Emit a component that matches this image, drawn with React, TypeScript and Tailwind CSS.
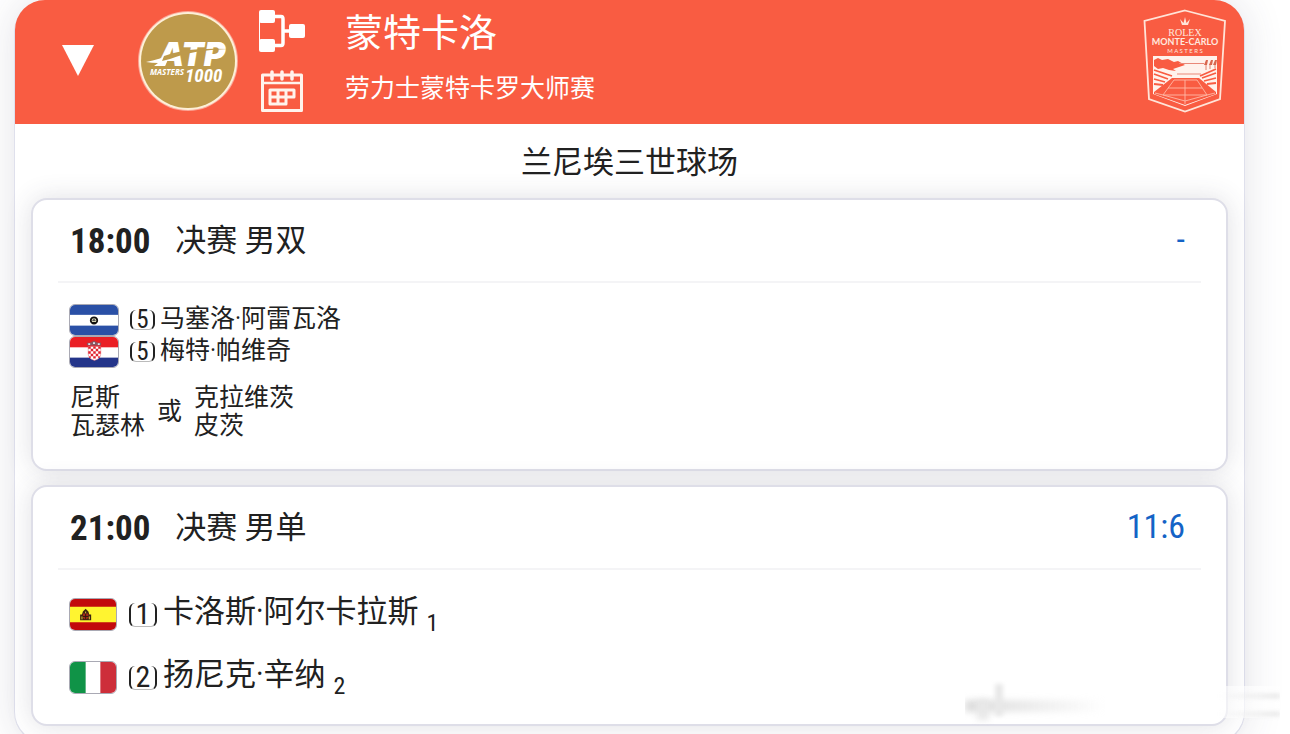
import { useState, type ReactNode } from 'react'

interface Player {
  country: Country
  seed: number
  name: string
  order?: number
}

type Country = 'sv' | 'hr' | 'es' | 'it'

const doubles: Player[] = [
  { country: 'sv', seed: 5, name: '马塞洛·阿雷瓦洛' },
  { country: 'hr', seed: 5, name: '梅特·帕维奇' },
]

const singles: Player[] = [
  { country: 'es', seed: 1, name: '卡洛斯·阿尔卡拉斯', order: 1 },
  { country: 'it', seed: 2, name: '扬尼克·辛纳', order: 2 },
]

function FlagArt({ country }: { country: Country }) {
  switch (country) {
    case 'sv':
      return (
        <>
          <rect width="50" height="32" fill="#fff" />
          <rect width="50" height="10.500" fill="#2a50a6" />
          <rect y="22" width="50" height="10" fill="#2a50a6" />
          <circle cx="25" cy="16.500" r="3.400" fill="#d6d6b4" stroke="#111" strokeWidth="1.800" />
          <path d="M23 17 L25 14 L27 17 Z" fill="#555" />
          <path d="M23 19 H27" stroke="#111" strokeWidth="2" />
        </>
      )
    case 'hr':
      return (
        <>
          <rect width="50" height="32" fill="#fff" />
          <rect width="50" height="11" fill="#ea1f25" />
          <rect y="22" width="50" height="10" fill="#24358a" />
          <path d="M18 9 L17.500 6 L21 6 L25 4 L29 6 L32.500 6 L32 9 Z" fill="#8a5560" />
          <path d="M19 7.500 h2 M24 6.500 h2 M29 7.500 h2" stroke="#dfe3ee" strokeWidth="1.800" />
          <path d="M19 10 h13 v8 q0 5 -6.500 7 q-6.500 -2 -6.500 -7 Z" fill="#fff" stroke="#e25a66" strokeWidth="0.500" />
          <path
            d="M19 10h2.600v2.600h-2.600z M24.200 10h2.600v2.600h-2.600z M29.400 10h2.600v2.600h-2.600z M21.600 12.600h2.600v2.600h-2.600z M26.800 12.600h2.600v2.600h-2.600z M19 15.200h2.600v2.600h-2.600z M24.200 15.200h2.600v2.600h-2.600z M29.400 15.200h2.600v2.600h-2.600z M21.600 17.800h2.600v2.600h-2.600z M26.800 17.800h2.600v2.600h-2.600z M20 20.400h1.600v2h-1.600z M24.200 20.400h2.600v2.600h-2.600z M29.400 20.400h1.600v2h-1.600z"
            fill="#e0222f"
          />
        </>
      )
    case 'es':
      return (
        <>
          <rect width="50" height="32" fill="#c20a0c" />
          <rect y="8" width="50" height="16" fill="#fff430" />
          <path d="M11 22 V16 h2 l1 -3 l3 -3 l3 3 l1 3 h2 v6 Z" fill="#3b2410" />
          <path d="M14 15 h6 v4 q-3 4 -6 0 Z" fill="#a3281a" />
          <path d="M13 18 v3 M21 18 v3 M17 13 v2" stroke="#e7cf3a" strokeWidth="1" />
          <path d="M17 15 v6 M14 18 h6" stroke="#2b1b0d" strokeWidth="1" />
        </>
      )
    case 'it':
      return (
        <>
          <rect width="50" height="32" fill="#fff" />
          <rect width="17" height="32" fill="#109347" />
          <rect x="33" width="17" height="32" fill="#cd2e3a" />
        </>
      )
  }
}

function Flag({ country, className }: { country: Country; className: string }) {
  return (
    <svg
      viewBox="0 0 50 32"
      preserveAspectRatio="none"
      aria-hidden="true"
      className={`shrink-0 rounded-md border border-[#a9a9b4] ${className}`}
    >
      <FlagArt country={country} />
    </svg>
  )
}

function AtpLogo() {
  return (
    <svg viewBox="0 0 104 104" className="h-[104px] w-[104px] shrink-0">
      <circle cx="52" cy="52" r="50" fill="#fff" opacity="0.450" />
      <circle cx="52" cy="52" r="49" fill="#fdf0d8" />
      <circle cx="52" cy="52" r="47" fill="#be9a4b" />
      <g fill="#fff" fontStyle="italic">
        <text x="22" y="57" fontSize="33" fontWeight="900" fontFamily="Inter, sans-serif">ATP</text>
        <text x="14" y="66" fontSize="8" fontWeight="700" fontFamily="'Open Sans', sans-serif">MASTERS</text>
        <text x="49" y="73" fontSize="19" fontWeight="700" fontFamily="'Roboto Condensed', sans-serif">1000</text>
      </g>
      <path d="M10 53 Q24 50 34 46 L29 57 L18 57 L22 54 Q16 54 10 53 Z" fill="#fff" />
      <path d="M28 47 Q50 38 92 40 Q56 41 34 50 L26 52 Z" fill="#be9a4b" />
    </svg>
  )
}

function DrawIcon() {
  return (
    <svg viewBox="0 0 46 42" className="h-[42px] w-[46px]" fill="#fff">
      <rect width="16" height="13" rx="2" />
      <rect y="29" width="16" height="13" rx="2" />
      <rect x="30" y="14" width="16" height="14" rx="2" />
      <path d="M15 6.500 H22 Q24 6.500 24 9 V33 Q24 35.500 22 35.500 H15 M24 21 H31" fill="none" stroke="#fff" strokeWidth="3.500" />
      <path d="M0.500 10 V32" stroke="#fff" strokeWidth="1" />
    </svg>
  )
}

function CalendarIcon() {
  return (
    <svg viewBox="0 0 42 42" className="h-[42px] w-[42px]" fill="none" stroke="#fff3ec">
      <path d="M1.500 5 H40.500 V40.500 H1.500 Z" strokeWidth="3" strokeLinejoin="round" />
      <path d="M2 13 H40" strokeWidth="2.500" />
      <path d="M11 2 V9 M21 2 V9 M31 2 V9" strokeWidth="3.500" strokeLinecap="round" />
      <path d="M9 20 H33 V27 H25 V34 H9 Z M9 27 H25 M17 20 V34 M25 20 V27" strokeWidth="3" strokeLinejoin="round" />
    </svg>
  )
}

function TournamentLogo() {
  return (
    <svg viewBox="0 0 84 104" className="h-[104px] w-[84px] shrink-0" fill="none">
      <path d="M42 1.500 L82 12 L77 90 L42 102.500 L6 90 L1.500 12 Z" stroke="#ffe4d8" strokeWidth="1.800" />
      <path d="M39 16 L37 10 L40.500 14 L42 8 L43.500 14 L47 10 L45 16 Z" fill="#ffe4d8" />
      <g fill="#ffe9df" textAnchor="middle">
        <text x="42" y="27" fontSize="10" fontFamily="'Liberation Serif', serif">ROLEX</text>
        <text x="42" y="36" fontSize="9" fontWeight="700" fontFamily="Lato, sans-serif">MONTE-CARLO</text>
        <text x="42" y="44" fontSize="6" fontFamily="Lato, sans-serif">M A S T E R S</text>
      </g>
      <path d="M10 47 H74 V85 L42 97 L10 85 Z" fill="#fff2ec" />
      <path d="M11 51 L15 49 L19 51 L25 50 L31 53 L35 52 L42 56 L36 58 L30 60 L33 62 L26 61 L20 59 L15 60 L11 57 Z" fill="#f95c42" />
      <path d="M36 54.500 H61 M34 65 H58" stroke="#e98878" strokeWidth="1" />
      <path d="M61 56 l2 -5 l2 0 l-1 5 Z M66 56 l2 -5 l2 0 l-1 5 Z M70 56 l2 -5 l2 0 l-1 5 Z" fill="#d9674f" />
      <path d="M63 55 v6 M67 55 v5 M72 55 v4" stroke="#d9674f" strokeWidth="0.800" />
      <path d="M11 61 L29 67 M11 65 L25 70 M11 70 L22 73 M11 75 L20 76 M73 60 L57 67 M73 64 L59 69 M73 69 L61 72 M73 74 L64 75" stroke="#f95c42" strokeWidth="1.800" />
      <path d="M29 69 H56 L73 83 V85 L42 96 L11 85 V83 Z" fill="#f95c42" />
      <path d="M31 71 H54 L64 86 H20 Z M42 71 V95 M25 79 H59 M12 84 L20 86 L42 92 L64 86 L72 84" stroke="#ffb9a7" strokeWidth="0.900" />
    </svg>
  )
}

function Seed({ value, large }: { value: number; large?: boolean }) {
  return (
    <span
      className={`flex shrink-0 items-center justify-center rounded-md border-x-2 border-b border-x-[#222] border-b-[#bbb] ${
        large ? 'h-6 w-7 text-[30px]' : 'h-5 w-[25px] text-[25px]'
      }`}
    >
      {value}
    </span>
  )
}

interface MatchCardProps {
  time: string
  title: string
  score: string
  children: ReactNode
}

function MatchCard({ time, title, score, children }: MatchCardProps) {
  return (
    <article className="rounded-2xl border-2 border-[#dedee8] bg-white px-[25px] shadow-[0_0_26px_rgba(60,60,90,0.16)]">
      <header className="flex h-[83px] items-center border-b-2 border-[#f4f4f6] px-3">
        <time className="pt-[2px] text-[35px] font-bold">{time}</time>
        <h3 className="ml-[25px] text-[31px]">{title}</h3>
        <a href="#score" className="ml-auto mr-1 pb-1 text-[34px] text-[#1463c6]">
          {score}
        </a>
      </header>
      {children}
    </article>
  )
}

export default function App() {
  const [open, setOpen] = useState(true)

  return (
    <main className="h-screen overflow-hidden bg-white pl-[14px] pr-[45px] font-['Roboto_Condensed','Roboto','Noto_Sans_CJK_SC',sans-serif] leading-none text-[#212121]">
      <section className="rounded-[32px] border-x border-b-2 border-[#dfe0ec] bg-white pb-4 shadow-[0_0_40px_rgba(60,60,90,0.14)]">
        <header className="flex h-[124px] items-center rounded-t-[30px] bg-[#f95c42] pb-[2px] pl-[47px] pr-[17px] text-white">
          <button type="button" aria-label="收起" aria-expanded={open} onClick={() => setOpen(!open)} className="mr-[42px]">
            <svg viewBox="0 0 32 32" className={`h-8 w-8 ${open ? '' : '-rotate-90'}`}>
              <path d="M0 0 H32 L16 31 Z" fill="#fff" />
            </svg>
          </button>
          <AtpLogo />
          <nav className="ml-[19px] flex w-[46px] flex-col items-center gap-[18px]">
            <a href="#draw" aria-label="签表"><DrawIcon /></a>
            <a href="#calendar" aria-label="赛程"><CalendarIcon /></a>
          </nav>
          <div className="ml-10 flex flex-col gap-6 pb-2">
            <h1 className="text-[38px]">蒙特卡洛</h1>
            <p className="text-[25px]">劳力士蒙特卡罗大师赛</p>
          </div>
          <div className="ml-auto">
            <TournamentLogo />
          </div>
        </header>

        {open && (
          <>
            <h2 className="flex h-[74px] items-center justify-center pt-[2px] text-[31px]">兰尼埃三世球场</h2>
            <div className="flex flex-col gap-[14px] px-4">
              <MatchCard time="18:00" title="决赛 男双" score="-">
                <div className="px-[11px] pb-[29px] pt-[21px]">
                  {doubles.map((p) => (
                    <div key={p.name} className="flex h-8 items-center text-[25px]">
                      <Flag country={p.country} className="mr-[11px] h-8 w-[50px]" />
                      <Seed value={p.seed} />
                      <span className="ml-[5px] pb-[3px]">{p.name}</span>
                    </div>
                  ))}
                  <div className="mt-4 flex items-center gap-3 pl-px text-[25px] leading-7">
                    <p>尼斯<br />瓦瑟林</p>
                    <span>或</span>
                    <p>克拉维茨<br />皮茨</p>
                  </div>
                </div>
              </MatchCard>

              <MatchCard time="21:00" title="决赛 男单" score="11:6">
                <div className="flex flex-col gap-[30px] px-[11px] pb-[30px] pt-7">
                  {singles.map((p) => (
                    <div key={p.name} className="flex h-[33px] items-center text-[31px]">
                      <Flag country={p.country} className="mr-3 h-[33px] w-12" />
                      <Seed value={p.seed} large />
                      <span className="ml-[6px] pb-[6px]">{p.name}</span>
                      <span className="ml-2 self-end text-2xl leading-4">{p.order}</span>
                    </div>
                  ))}
                </div>
              </MatchCard>
            </div>
          </>
        )}
      </section>

      {/* Faded strip in the bottom corner */}
      <div aria-hidden="true" className="absolute bottom-2 right-[10px] h-[46px] w-[315px] overflow-hidden">
        <div className="absolute inset-x-0 bottom-2 h-8 bg-gradient-to-r from-white/0 to-white/70" />
        <div className="absolute bottom-[14px] left-0 h-3 w-[140px] bg-gradient-to-r from-[#dcdcdc] to-white/0 blur-[3px]" />
        <div className="absolute left-[30px] top-1 h-8 w-2 bg-[#e8e8e8] blur-[2px]" />
        <div className="absolute bottom-[6px] left-3 h-5 w-3 bg-[#e8e8e8] blur-[3px]" />
        <div className="absolute bottom-7 right-0 h-1 w-[60px] bg-gradient-to-r from-white/0 to-[#e4e4e4] blur-[2px]" />
        <div className="absolute bottom-[10px] right-0 h-1 w-[60px] bg-gradient-to-r from-white/0 to-[#e4e4e4] blur-[2px]" />
      </div>
    </main>
  )
}
